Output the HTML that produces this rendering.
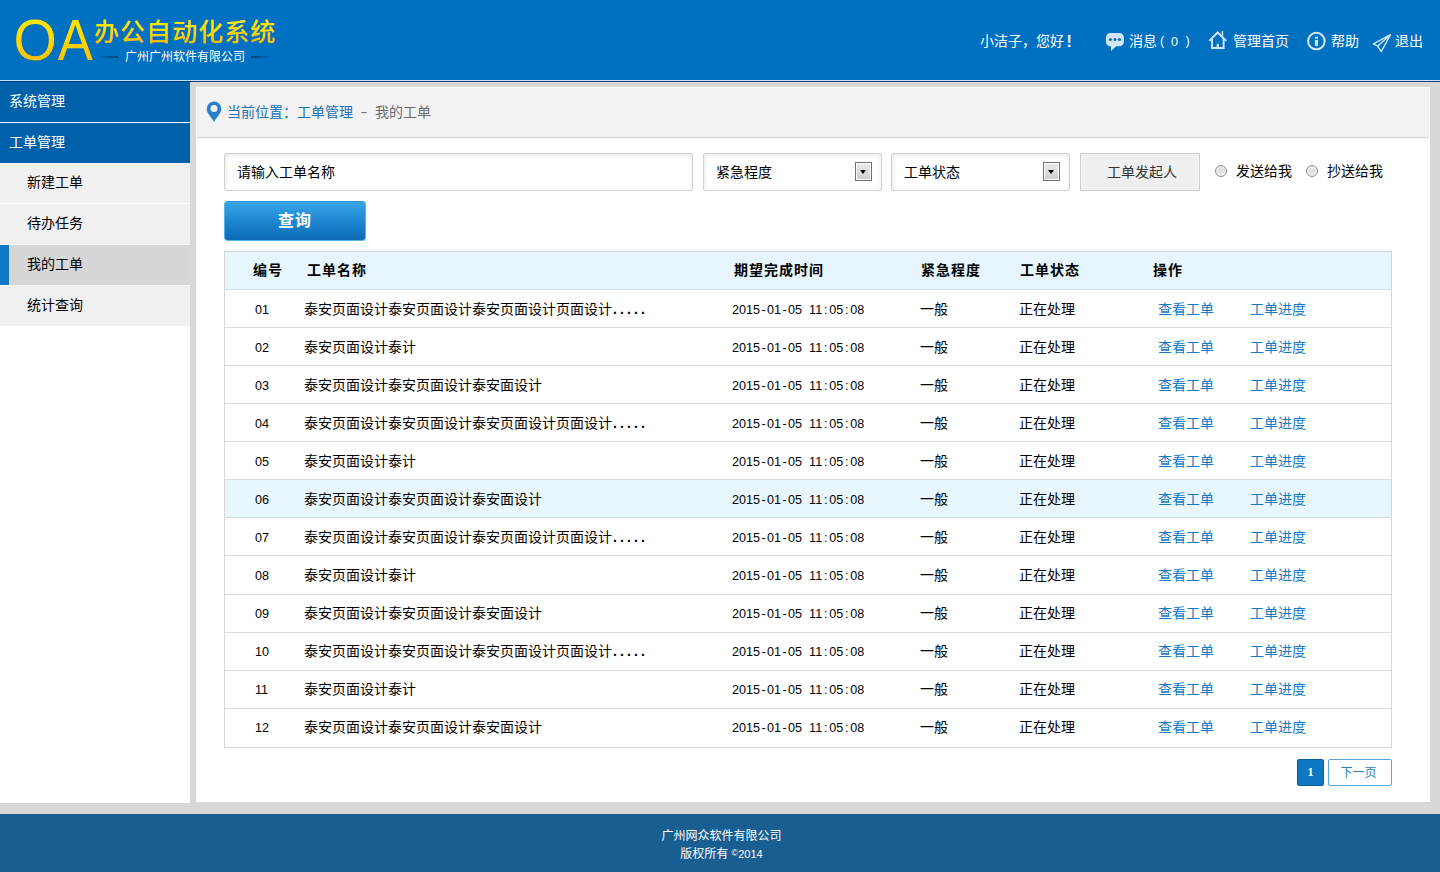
<!DOCTYPE html>
<html lang="zh-CN">
<head>
<meta charset="utf-8">
<title>OA办公自动化系统</title>
<style>
*{box-sizing:border-box;margin:0;padding:0}
html,body{width:1440px;height:872px;overflow:hidden}
body{position:relative;background:#d8d8d8;font-family:"Liberation Sans","Noto Sans CJK SC",sans-serif;font-size:14px;color:#000}
.abs{position:absolute}
#header{left:0;top:0;width:1440px;height:80px;background:#0070c0}
#hline1{left:0;top:80px;width:1440px;height:1px;background:#bfe3f7}
#hline2{left:0;top:81px;width:1440px;height:1px;background:#003a78}
#sidebar{left:0;top:82px;width:190px;height:721px;background:#fff}
.m1{height:41px;background:#0061ab;color:#fff;border-bottom:1px solid #fff;line-height:38px;padding-left:9px;font-size:14px}
.m1.last{border-bottom:none;height:40px}
.m2{height:41px;background:#f0f0f0;color:#000;border-bottom:1px solid #fff;line-height:38px;padding-left:27px;font-size:14px;position:relative}
.m2.on{background:#d6d6d6}
.m2.on:before{content:"";position:absolute;left:0;top:0;width:9px;height:40px;background:#1278c6}
#panel{left:196px;top:87px;width:1234px;height:715px;background:#fff}
#crumb{left:1px;top:1px;width:1232px;height:50px;background:#f2f2f2;border-bottom:1px solid #d0d0d0;line-height:48px;color:#1a6fb5}
#footer{left:0;top:814px;width:1440px;height:58px;background:#195e90;color:#fff;font-size:12px;text-align:center;line-height:18px;padding-top:13px;padding-left:3px}

.hd{position:absolute;top:31px;height:20px;line-height:20px;color:#fff;font-size:14px;white-space:nowrap}
.hn{font-family:"Liberation Sans",sans-serif;font-size:12.600px}
.ico{position:absolute;overflow:visible}
#logo{position:absolute;left:0;top:0}
.inp{position:absolute;top:153px;height:38px;border:1px solid #d2d2d2;border-radius:2px;background:#fff;line-height:36px;font-size:14px;color:#000;box-shadow:inset 0 2px 4px rgba(0,0,0,.07),inset 2px 0 3px rgba(0,0,0,.03)}
.dd{position:absolute;right:9px;top:8px;width:17px;height:19px;border:1px solid #707070;background:linear-gradient(#ebebeb,#cfcfcf);box-shadow:inset 0 0 0 1px #fff}
.dd:after{content:"";position:absolute;left:4px;top:7px;border:3.500px solid transparent;border-top:4px solid #000;border-bottom:none}
.rad{position:absolute;top:165px;width:12px;height:12px;border-radius:50%;border:1px solid #8f8f8f;background:radial-gradient(circle at 50% 45%,#dcdee0 0,#e2e4e6 45%,#f8f8f8 75%,#fff 100%)}
.rl{position:absolute;top:161px;line-height:20px;font-size:14px;color:#000}
#tbl{position:absolute;left:224px;top:251px;width:1168px;height:497px;border:1px solid #d6d6d6;background:#fff}
.tr{position:absolute;left:0;width:1166px;border-bottom:1px solid #dcdcdc;font-size:14px;white-space:nowrap}
.tr span{position:absolute;top:1px;line-height:inherit}
.tr.th span{top:0;letter-spacing:1px}
.tr span.num{top:2px}
.tr.lo span{top:0}
.tr.lo span.num{top:1px}
.dots{letter-spacing:3.100px;margin-left:1px;font-weight:bold}
.th{background:#e6f5fe;font-weight:bold}
.hl{background:#e8f6fe}
.num{font-family:"Liberation Sans",sans-serif;font-size:12.600px}
.num i{display:inline-block;width:7px;text-align:center;font-style:normal}
.lk{color:#1279c6}
</style>
</head>
<body>
<div id="header" class="abs">
<svg id="logo" width="300" height="80" viewBox="0 0 300 80">
  <defs>
    <linearGradient id="gold" x1="0" y1="0" x2="0" y2="1">
      <stop offset="0" stop-color="#fff000"/>
      <stop offset="0.55" stop-color="#ffd400"/>
      <stop offset="1" stop-color="#ffb000"/>
    </linearGradient>
    <linearGradient id="lnL" x1="0" y1="0" x2="1" y2="0">
      <stop offset="0" stop-color="#0a3f86" stop-opacity="0"/>
      <stop offset="1" stop-color="#0a3f86" stop-opacity="1"/>
    </linearGradient>
    <linearGradient id="lnR" x1="0" y1="0" x2="1" y2="0">
      <stop offset="0" stop-color="#0a3f86" stop-opacity="1"/>
      <stop offset="1" stop-color="#0a3f86" stop-opacity="0"/>
    </linearGradient>
  </defs>
  <text transform="translate(13.600 60.300) scale(0.960 1)" font-family="'Liberation Sans',sans-serif" font-size="58" fill="url(#gold)">O</text>
  <text transform="translate(57.800 60.300) scale(0.908 1)" font-family="'Liberation Sans',sans-serif" font-size="58" fill="url(#gold)">A</text>
  <text x="94" y="41.400" font-family="'Liberation Sans','Noto Sans CJK SC',sans-serif" font-size="25" font-weight="500" fill="url(#gold)" letter-spacing="1.050">办公自动化系统</text>
  <rect x="96" y="56" width="22" height="2" fill="url(#lnL)"/>
  <rect x="251" y="56" width="22" height="2" fill="url(#lnR)"/>
  <text x="125" y="61" font-family="'Liberation Sans','Noto Sans CJK SC',sans-serif" font-size="12" fill="#fff">广州广州软件有限公司</text>
</svg>
<div class="hd" style="left:980px">小洁子，您好<b style="margin-left:2.500px;font-family:'Liberation Sans',sans-serif;font-size:16px;position:relative;top:1px">!</b></div>
<svg class="ico" style="left:1105px;top:32px" width="20" height="20" viewBox="0 0 20 20"><path d="M5.400 0.900H14.400A4.500 4.500 0 0 1 18.900 5.400V9.800A4.500 4.500 0 0 1 14.400 14.300H11.200L6.100 18.900L5.800 14.300H5.400A4.500 4.500 0 0 1 0.900 9.800V5.400A4.500 4.500 0 0 1 5.400 0.900Z" fill="#d2e6fa"/><circle cx="5.400" cy="7.500" r="1.550" fill="#0f70c2"/><circle cx="10" cy="7.500" r="1.550" fill="#0f70c2"/><circle cx="14.500" cy="7.500" r="1.550" fill="#0f70c2"/></svg>
<div class="hd" style="left:1129px">消息</div>
<div class="hd hn" style="left:1160px">(</div>
<div class="hd hn" style="left:1171px;top:32px">0</div>
<div class="hd hn" style="left:1185.500px">)</div>
<svg class="ico" style="left:1208px;top:30px" width="20" height="20" viewBox="0 0 20 20"><g fill="none" stroke="#d2e6fa"><path d="M1.300 10.900L9.600 2.500l8.700 8.400" stroke-width="2"/><path d="M4.050 8.500V17.950H15.650V8.500" stroke-width="1.900"/><path d="M14.400 6V1" stroke-width="1.500"/></g><rect x="8.600" y="13.900" width="2.400" height="3.300" fill="#d2e6fa"/></svg>
<div class="hd" style="left:1233px">管理首页</div>
<svg class="ico" style="left:1306px;top:31px" width="21" height="21" viewBox="0 0 21 21"><circle cx="10.400" cy="10.050" r="8.300" fill="none" stroke="#d2e6fa" stroke-width="2"/><rect x="8.900" y="5.700" width="3.100" height="1.900" fill="#d2e6fa"/><rect x="8.900" y="8.900" width="3.100" height="6.050" fill="#d2e6fa"/></svg>
<div class="hd" style="left:1331px">帮助</div>
<svg class="ico" style="left:1371px;top:32px" width="22" height="22" viewBox="0 0 22 22"><path d="M19.500 2.600L2.400 11.900L6.700 14.200L10.200 19.600ZM19.500 2.600L6.700 14.200" fill="none" stroke="#d2e6fa" stroke-width="1.400" stroke-linejoin="round"/></svg>
<div class="hd" style="left:1395px">退出</div>
</div>
<div id="hline1" class="abs"></div>
<div id="hline2" class="abs"></div>
<div id="sidebar" class="abs">
  <div class="m1">系统管理</div>
  <div class="m1 last">工单管理</div>
  <div class="m2">新建工单</div>
  <div class="m2">待办任务</div>
  <div class="m2 on">我的工单</div>
  <div class="m2">统计查询</div>
</div>
<div id="panel" class="abs">
  <div id="crumb" class="abs">
<svg class="ico" style="left:8.500px;top:13px" width="16" height="22" viewBox="0 0 16 22"><path d="M8 0.500a7.300 7.300 0 0 1 7.300 7.300c0 4.200-4.300 8.200-7.300 13.200c-3-5-7.300-9-7.300-13.200a7.300 7.300 0 0 1 7.300-7.300z" fill="#2a80c8"/><circle cx="8" cy="7.600" r="3.500" fill="#f2f2f2"/></svg>
<span style="position:absolute;left:30px;top:0;white-space:nowrap">当前位置：工单管理<span style="color:#777;display:inline-block;width:22px;text-align:center;transform:scaleX(1.500)">-</span><span style="color:#6a6a6a">我的工单</span></span>
</div>

<div class="inp" style="left:28px;top:66px;width:469px;padding-left:12px">请输入工单名称</div>
<div class="inp" style="left:507px;top:66px;width:179px;padding-left:12px">紧急程度<i class="dd"></i></div>
<div class="inp" style="left:695px;top:66px;width:179px;padding-left:12px">工单状态<i class="dd"></i></div>
<div class="abs" style="left:884px;top:66px;width:120px;height:38px;border:1px solid #cfcfcf;background:#efefef;line-height:36px;text-align:center;font-size:14px;color:#333;padding-left:4px">工单发起人</div>
<i class="rad" style="left:1019px;top:78px"></i><span class="rl" style="left:1040px;top:74px">发送给我</span>
<i class="rad" style="left:1110px;top:78px"></i><span class="rl" style="left:1131px;top:74px">抄送给我</span>
<div class="abs" id="qbtn" style="left:28px;top:114px;width:142px;height:40px;border:1px solid #52b2ea;border-top-color:#2f96d8;border-radius:4px;background:linear-gradient(#38a5e7 0%,#1d87d1 50%,#0c69b5 100%);color:#fff;font-weight:bold;font-size:16px;line-height:38px;text-align:center;letter-spacing:1px">查询</div>
<div id="tbl" style="left:28px;top:164px">
<div class="tr th" style="top:0;height:38px;line-height:37px"><span style="left:28px">编号</span><span style="left:82px">工单名称</span><span style="left:509px">期望完成时间</span><span style="left:696px">紧急程度</span><span style="left:795px">工单状态</span><span style="left:928px">操作</span></div>
<div class="tr" style="top:38px;height:38px;line-height:37px"><span class="num" style="left:30px">01</span><span style="left:79px">泰安页面设计泰安页面设计泰安页面设计页面设计<i class="dots" style="font-style:normal">.....</i></span><span class="num" style="left:507px">2015<i>-</i>01<i>-</i>05<i>&nbsp;</i>11<i>:</i>05<i>:</i>08</span><span style="left:695px">一般</span><span style="left:794px">正在处理</span><span class="lk" style="left:933px">查看工单</span><span class="lk" style="left:1025px">工单进度</span></div>
<div class="tr" style="top:76px;height:38px;line-height:37px"><span class="num" style="left:30px">02</span><span style="left:79px">泰安页面设计泰计</span><span class="num" style="left:507px">2015<i>-</i>01<i>-</i>05<i>&nbsp;</i>11<i>:</i>05<i>:</i>08</span><span style="left:695px">一般</span><span style="left:794px">正在处理</span><span class="lk" style="left:933px">查看工单</span><span class="lk" style="left:1025px">工单进度</span></div>
<div class="tr" style="top:114px;height:38px;line-height:37px"><span class="num" style="left:30px">03</span><span style="left:79px">泰安页面设计泰安页面设计泰安面设计</span><span class="num" style="left:507px">2015<i>-</i>01<i>-</i>05<i>&nbsp;</i>11<i>:</i>05<i>:</i>08</span><span style="left:695px">一般</span><span style="left:794px">正在处理</span><span class="lk" style="left:933px">查看工单</span><span class="lk" style="left:1025px">工单进度</span></div>
<div class="tr" style="top:152px;height:38px;line-height:37px"><span class="num" style="left:30px">04</span><span style="left:79px">泰安页面设计泰安页面设计泰安页面设计页面设计<i class="dots" style="font-style:normal">.....</i></span><span class="num" style="left:507px">2015<i>-</i>01<i>-</i>05<i>&nbsp;</i>11<i>:</i>05<i>:</i>08</span><span style="left:695px">一般</span><span style="left:794px">正在处理</span><span class="lk" style="left:933px">查看工单</span><span class="lk" style="left:1025px">工单进度</span></div>
<div class="tr" style="top:190px;height:38px;line-height:37px"><span class="num" style="left:30px">05</span><span style="left:79px">泰安页面设计泰计</span><span class="num" style="left:507px">2015<i>-</i>01<i>-</i>05<i>&nbsp;</i>11<i>:</i>05<i>:</i>08</span><span style="left:695px">一般</span><span style="left:794px">正在处理</span><span class="lk" style="left:933px">查看工单</span><span class="lk" style="left:1025px">工单进度</span></div>
<div class="tr hl" style="top:228px;height:38px;line-height:37px"><span class="num" style="left:30px">06</span><span style="left:79px">泰安页面设计泰安页面设计泰安面设计</span><span class="num" style="left:507px">2015<i>-</i>01<i>-</i>05<i>&nbsp;</i>11<i>:</i>05<i>:</i>08</span><span style="left:695px">一般</span><span style="left:794px">正在处理</span><span class="lk" style="left:933px">查看工单</span><span class="lk" style="left:1025px">工单进度</span></div>
<div class="tr" style="top:266px;height:38px;line-height:37px"><span class="num" style="left:30px">07</span><span style="left:79px">泰安页面设计泰安页面设计泰安页面设计页面设计<i class="dots" style="font-style:normal">.....</i></span><span class="num" style="left:507px">2015<i>-</i>01<i>-</i>05<i>&nbsp;</i>11<i>:</i>05<i>:</i>08</span><span style="left:695px">一般</span><span style="left:794px">正在处理</span><span class="lk" style="left:933px">查看工单</span><span class="lk" style="left:1025px">工单进度</span></div>
<div class="tr" style="top:304px;height:39px;line-height:37px"><span class="num" style="left:30px">08</span><span style="left:79px">泰安页面设计泰计</span><span class="num" style="left:507px">2015<i>-</i>01<i>-</i>05<i>&nbsp;</i>11<i>:</i>05<i>:</i>08</span><span style="left:695px">一般</span><span style="left:794px">正在处理</span><span class="lk" style="left:933px">查看工单</span><span class="lk" style="left:1025px">工单进度</span></div>
<div class="tr lo" style="top:343px;height:38px;line-height:37px"><span class="num" style="left:30px">09</span><span style="left:79px">泰安页面设计泰安页面设计泰安面设计</span><span class="num" style="left:507px">2015<i>-</i>01<i>-</i>05<i>&nbsp;</i>11<i>:</i>05<i>:</i>08</span><span style="left:695px">一般</span><span style="left:794px">正在处理</span><span class="lk" style="left:933px">查看工单</span><span class="lk" style="left:1025px">工单进度</span></div>
<div class="tr lo" style="top:381px;height:38px;line-height:37px"><span class="num" style="left:30px">10</span><span style="left:79px">泰安页面设计泰安页面设计泰安页面设计页面设计<i class="dots" style="font-style:normal">.....</i></span><span class="num" style="left:507px">2015<i>-</i>01<i>-</i>05<i>&nbsp;</i>11<i>:</i>05<i>:</i>08</span><span style="left:695px">一般</span><span style="left:794px">正在处理</span><span class="lk" style="left:933px">查看工单</span><span class="lk" style="left:1025px">工单进度</span></div>
<div class="tr lo" style="top:419px;height:38px;line-height:37px"><span class="num" style="left:30px">11</span><span style="left:79px">泰安页面设计泰计</span><span class="num" style="left:507px">2015<i>-</i>01<i>-</i>05<i>&nbsp;</i>11<i>:</i>05<i>:</i>08</span><span style="left:695px">一般</span><span style="left:794px">正在处理</span><span class="lk" style="left:933px">查看工单</span><span class="lk" style="left:1025px">工单进度</span></div>
<div class="tr lo" style="top:457px;height:38px;line-height:37px;border-bottom:none"><span class="num" style="left:30px">12</span><span style="left:79px">泰安页面设计泰安页面设计泰安面设计</span><span class="num" style="left:507px">2015<i>-</i>01<i>-</i>05<i>&nbsp;</i>11<i>:</i>05<i>:</i>08</span><span style="left:695px">一般</span><span style="left:794px">正在处理</span><span class="lk" style="left:933px">查看工单</span><span class="lk" style="left:1025px">工单进度</span></div>
</div>
<div class="abs" style="left:1101px;top:672px;width:27px;height:27px;background:#0e78c3;border:1px solid #0c5f9e;border-radius:2px;color:#fff;font-weight:bold;font-size:12px;line-height:25px;text-align:center;font-family:'Liberation Serif','Noto Serif CJK SC',serif">1</div>
<div class="abs" style="left:1132px;top:672px;width:64px;height:27px;background:#fff;border:1px solid #5aa5dc;border-radius:2px;color:#2d7fc0;font-size:12px;line-height:27px;text-align:center;padding-right:3px">下一页</div>
</div>
<div id="footer" class="abs">广州网众软件有限公司<br>版权所有 <span style="font-size:9px;position:relative;top:-2px">©</span><span style="font-size:11px">2014</span></div>
</body>
</html>
